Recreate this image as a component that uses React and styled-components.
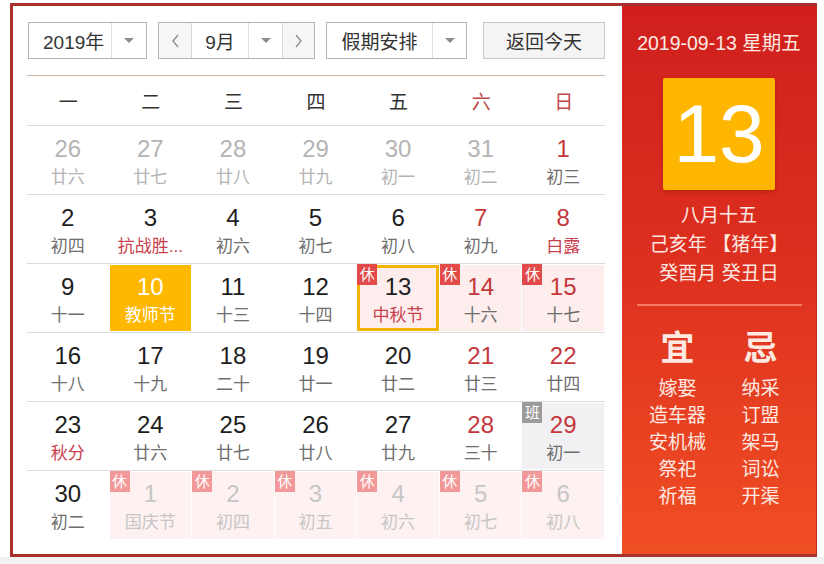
import React from "react";
import styled, { createGlobalStyle, css } from "styled-components";

const FONT = `"Liberation Sans", "Noto Sans CJK SC", sans-serif`;

const Global = createGlobalStyle`
  html, body { margin: 0; padding: 0; background: #fff; }
  body { font-family: ${FONT}; }
  * { box-sizing: border-box; }
`;

const Page = styled.div`
  width: 824px;
  height: 564px;
  padding: 3px 0 0 10px;
  background: linear-gradient(#fff 0, #fff 557px, #f2f2f2 557px);
`;

const Frame = styled.div`
  display: flex;
  width: 807px;
  height: 554px;
  border: 3px solid #a8302f;
  border-right: 1px solid #b8321f;
`;

const Left = styled.div`
  width: 609px;
  background: #fff;
  padding: 16px 17px 0 14px;
  display: flex;
  flex-direction: column;
`;

const Toolbar = styled.div`
  display: flex;
  align-items: center;
  height: 37px;
  padding-left: 1px;
`;

const SelectBox = styled.div`
  display: flex;
  height: 37px;
  border: 1px solid #b4b4b4;
  background: #fff;
  margin-right: ${(p) => p.$mr || 0}px;
`;

const SelectText = styled.div`
  width: ${(p) => p.$w}px;
  display: flex;
  align-items: center;
  justify-content: ${(p) => (p.$left ? "flex-start" : "center")};
  padding-left: ${(p) => (p.$left ? 14 : 0)}px;
  font-size: 19px;
  color: #333;
`;

const ArrowPart = styled.div`
  width: ${(p) => p.$w}px;
  border-left: 1px solid #dedede;
  display: flex;
  align-items: center;
  justify-content: center;
  &::after {
    content: "";
    width: 0;
    height: 0;
    border-left: 5px solid transparent;
    border-right: 5px solid transparent;
    border-top: 5px solid #8c8c8c;
  }
`;

const NavBtn = styled.div`
  width: ${(p) => p.$w}px;
  background: #f6f6f6;
  display: flex;
  align-items: center;
  justify-content: center;
  ${(p) =>
    p.$side === "left"
      ? css`border-right: 1px solid #d8d8d8;`
      : css`border-left: 1px solid #d8d8d8;`}
`;

const TodayBtn = styled.div`
  width: 122px;
  height: 37px;
  border: 1px solid #c8c8c8;
  background: #f4f4f4;
  display: flex;
  align-items: center;
  justify-content: center;
  font-size: 19px;
  color: #333;
`;

const WeekHeader = styled.div`
  margin-top: 16px;
  display: grid;
  grid-template-columns: repeat(7, 1fr);
  height: 51px;
  border-top: 1px solid #c9b8a8;
  border-bottom: 1px solid #dcdcdc;
  align-items: center;
`;

const WeekDay = styled.div`
  text-align: center;
  font-size: 19px;
  color: ${(p) => (p.$weekend ? "#c0484c" : "#333")};
`;

const Row = styled.div`
  display: grid;
  grid-template-columns: repeat(7, 1fr);
  height: 69px;
  border-bottom: ${(p) => (p.$last ? "none" : "1px solid #dcdcdc")};
`;

const Cell = styled.div`
  position: relative;
  margin: 1px 1px 1px 0;
  padding-top: 7px;
  text-align: center;
  background: ${(p) =>
    p.$today
      ? "#ffb800"
      : p.$rest && p.$other
      ? "#fdf1f1"
      : p.$rest
      ? "#fdeded"
      : p.$work
      ? "#f1f1f3"
      : "transparent"};
  ${(p) =>
    p.$selected &&
    css`
      box-shadow: inset 0 0 0 3px #f3b300;
    `}
`;

const Num = styled.div`
  font-size: 24px;
  line-height: 30px;
  color: ${(p) =>
    p.$today
      ? "#fff"
      : p.$other && p.$rest
      ? "#c6c6c6"
      : p.$other
      ? "#b4b4b4"
      : p.$weekend
      ? "#c4373c"
      : "#1e1e1e"};
`;

const Lunar = styled.div`
  margin-top: 3px;
  font-size: 17px;
  line-height: 22px;
  white-space: nowrap;
  overflow: hidden;
  color: ${(p) =>
    p.$today
      ? "#fff"
      : p.$other && p.$rest
      ? "#c6c6c6"
      : p.$other
      ? "#b4b4b4"
      : p.$red
      ? "#c8404e"
      : "#6e6e6e"};
`;

const Badge = styled.div`
  position: absolute;
  top: -1px;
  left: 0;
  width: 20px;
  height: 21px;
  font-size: 15px;
  line-height: 21px;
  text-align: center;
  color: #fff;
  background: ${(p) =>
    p.$kind === "work" ? "#9b9b9b" : p.$faded ? "#f29898" : "#e24a4a"};
`;

const Right = styled.div`
  width: 194px;
  background: linear-gradient(180deg, #d01f1d 0%, #dc2f1f 45%, #f04e23 100%);
  display: flex;
  flex-direction: column;
  align-items: center;
  padding-top: 25px;
  color: #fde9e2;
`;

const DateLine = styled.div`
  font-size: 19.5px;
  line-height: 24px;
  white-space: nowrap;
`;

const BigDay = styled.div`
  margin-top: 23px;
  width: 112px;
  height: 112px;
  border-radius: 2px;
  background: #ffb600;
  box-shadow: 0 2px 4px rgba(120, 20, 0, 0.35);
  display: flex;
  align-items: center;
  justify-content: center;
  font-size: 82px;
  color: #fff;
  line-height: 1;
`;

const LunarInfo = styled.div`
  margin-top: 11px;
  font-size: 19px;
  line-height: 29px;
  text-align: center;
  white-space: nowrap;
`;

const Divider = styled.div`
  margin-top: 16px;
  width: 165px;
  height: 2px;
  background: #f47a63;
`;

const YiJi = styled.div`
  margin-top: 22px;
  display: grid;
  grid-template-columns: 83px 83px;
  text-align: center;
`;

const YiJiHead = styled.div`
  font-size: 34px;
  line-height: 40px;
  font-weight: bold;
  margin-bottom: 7px;
`;

const YiJiItem = styled.div`
  font-size: 19px;
  line-height: 27px;
  white-space: nowrap;
`;

const Chevron = ({ dir }) => (
  <svg width="9" height="14" viewBox="0 0 9 14">
    <polyline
      points={dir === "left" ? "7,1 2,7 7,13" : "2,1 7,7 2,13"}
      fill="none"
      stroke="#8a8a8a"
      strokeWidth="1.3"
    />
  </svg>
);

const c = (d, l, o = {}) => ({ d, l, ...o });

const rows = [
  [
    c(26, "廿六", { other: 1 }),
    c(27, "廿七", { other: 1 }),
    c(28, "廿八", { other: 1 }),
    c(29, "廿九", { other: 1 }),
    c(30, "初一", { other: 1 }),
    c(31, "初二", { other: 1, weekend: 1 }),
    c(1, "初三", { weekend: 1 }),
  ],
  [
    c(2, "初四"),
    c(3, "抗战胜...", { red: 1 }),
    c(4, "初六"),
    c(5, "初七"),
    c(6, "初八"),
    c(7, "初九", { weekend: 1 }),
    c(8, "白露", { weekend: 1, red: 1 }),
  ],
  [
    c(9, "十一"),
    c(10, "教师节", { today: 1 }),
    c(11, "十三"),
    c(12, "十四"),
    c(13, "中秋节", { red: 1, selected: 1, rest: 1 }),
    c(14, "十六", { weekend: 1, rest: 1 }),
    c(15, "十七", { weekend: 1, rest: 1 }),
  ],
  [
    c(16, "十八"),
    c(17, "十九"),
    c(18, "二十"),
    c(19, "廿一"),
    c(20, "廿二"),
    c(21, "廿三", { weekend: 1 }),
    c(22, "廿四", { weekend: 1 }),
  ],
  [
    c(23, "秋分", { red: 1 }),
    c(24, "廿六"),
    c(25, "廿七"),
    c(26, "廿八"),
    c(27, "廿九"),
    c(28, "三十", { weekend: 1 }),
    c(29, "初一", { weekend: 1, work: 1 }),
  ],
  [
    c(30, "初二"),
    c(1, "国庆节", { other: 1, rest: 1 }),
    c(2, "初四", { other: 1, rest: 1 }),
    c(3, "初五", { other: 1, rest: 1 }),
    c(4, "初六", { other: 1, rest: 1 }),
    c(5, "初七", { other: 1, rest: 1 }),
    c(6, "初八", { other: 1, rest: 1 }),
  ],
];

const weekdays = ["一", "二", "三", "四", "五", "六", "日"];
const yi = ["嫁娶", "造车器", "安机械", "祭祀", "祈福"];
const ji = ["纳采", "订盟", "架马", "词讼", "开渠"];

export default function App() {
  return (
    <>
      <Global />
      <Page>
        <Frame>
          <Left>
            <Toolbar>
              <SelectBox $mr={11}>
                <SelectText $w={82} $left>
                  2019年
                </SelectText>
                <ArrowPart $w={35} />
              </SelectBox>
              <SelectBox $mr={11}>
                <NavBtn $w={33} $side="left">
                  <Chevron dir="left" />
                </NavBtn>
                <SelectText $w={56}>9月</SelectText>
                <ArrowPart $w={34} />
                <NavBtn $w={32} $side="right">
                  <Chevron dir="right" />
                </NavBtn>
              </SelectBox>
              <SelectBox $mr={16}>
                <SelectText $w={105}>假期安排</SelectText>
                <ArrowPart $w={34} />
              </SelectBox>
              <TodayBtn>返回今天</TodayBtn>
            </Toolbar>
            <WeekHeader>
              {weekdays.map((w, i) => (
                <WeekDay key={w} $weekend={i >= 5}>
                  {w}
                </WeekDay>
              ))}
            </WeekHeader>
            {rows.map((r, ri) => (
              <Row key={ri} $last={ri === rows.length - 1}>
                {r.map((x, ci) => (
                  <Cell
                    key={ci}
                    $today={x.today}
                    $rest={x.rest}
                    $work={x.work}
                    $other={x.other}
                    $selected={x.selected}
                  >
                    {x.rest && (
                      <Badge $kind="rest" $faded={x.other}>
                        休
                      </Badge>
                    )}
                    {x.work && <Badge $kind="work">班</Badge>}
                    <Num
                      $today={x.today}
                      $other={x.other}
                      $rest={x.rest}
                      $weekend={x.weekend}
                    >
                      {x.d}
                    </Num>
                    <Lunar
                      $today={x.today}
                      $other={x.other}
                      $rest={x.rest}
                      $red={x.red}
                    >
                      {x.l}
                    </Lunar>
                  </Cell>
                ))}
              </Row>
            ))}
          </Left>
          <Right>
            <DateLine>2019-09-13 星期五</DateLine>
            <BigDay>13</BigDay>
            <LunarInfo>
              <div>八月十五</div>
              <div>己亥年 【猪年】</div>
              <div>癸酉月 癸丑日</div>
            </LunarInfo>
            <Divider />
            <YiJi>
              <div>
                <YiJiHead>宜</YiJiHead>
                {yi.map((t) => (
                  <YiJiItem key={t}>{t}</YiJiItem>
                ))}
              </div>
              <div>
                <YiJiHead>忌</YiJiHead>
                {ji.map((t) => (
                  <YiJiItem key={t}>{t}</YiJiItem>
                ))}
              </div>
            </YiJi>
          </Right>
        </Frame>
      </Page>
    </>
  );
}
